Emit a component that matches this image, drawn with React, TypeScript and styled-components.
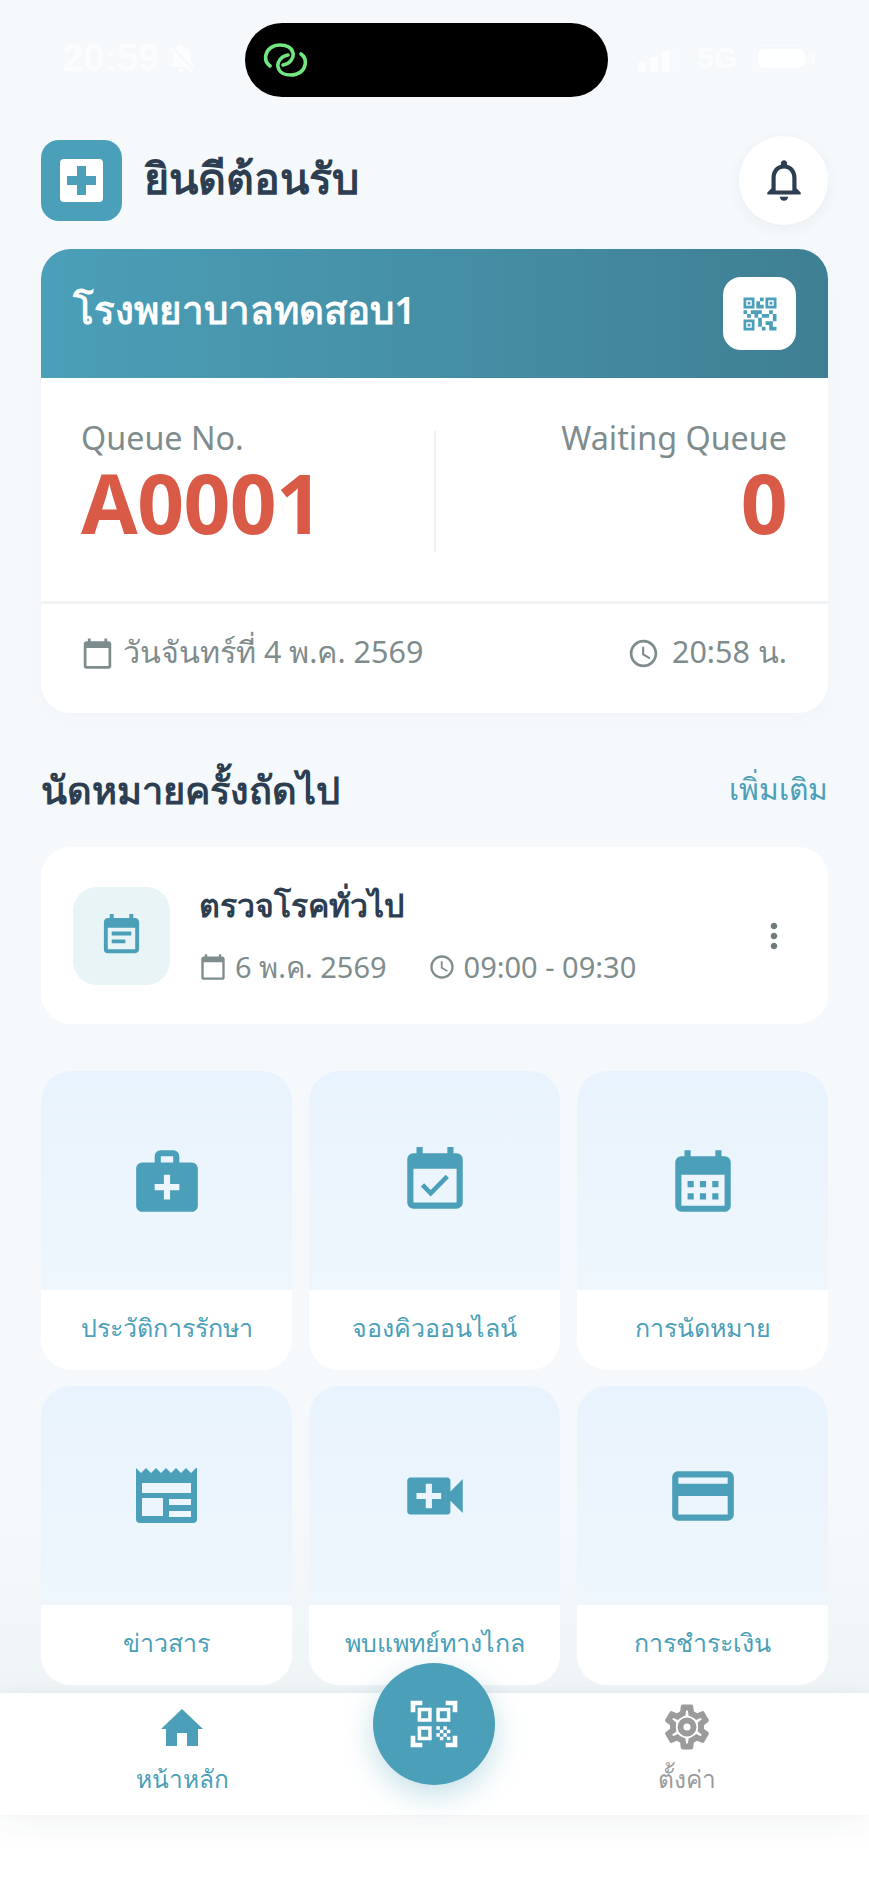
import React from 'react';
import styled, { createGlobalStyle } from 'styled-components';
import {
  MdMedicalServices, MdEventAvailable, MdCalendarMonth, MdVideoCall, MdCreditCard,
  MdOutlineSettings, MdQrCode2, MdQrCodeScanner, MdOutlineNotifications, MdCalendarToday,
  MdAccessTime, MdEventNote, MdMoreVert,
} from 'react-icons/md';

const TEAL = '#4b9fb8';
const INK = '#2c3e50';
const GREY = '#7f8c8d';
const RED = '#d95a47';

const Global = createGlobalStyle`
  html, body { margin: 0; padding: 0; background: #fff; }
  body { font-family: "Noto Sans", "DejaVu Sans", sans-serif; }
  * { box-sizing: border-box; }
`;

const Page = styled.div`
  width: 869px; height: 1884px; display: flex; flex-direction: column; overflow: hidden;
  background: #f5f9fc; position: relative;
`;
const StatusBar = styled.div`
  height: 135px; flex: none; padding: 23px 53px 0 62px; display: grid; grid-template-columns: 183px 363px 1fr; align-items: start;
  color: rgba(255,255,255,.62); font-family: "Liberation Sans", sans-serif; font-weight: 700;
`;
const StatusLeft = styled.div`
  display: flex; align-items: center; gap: 9px; height: 70px; font-size: 38px;
`;
const StatusRight = styled.div`
  display: flex; align-items: center; justify-content: flex-end; gap: 16px; height: 70px; font-size: 30px;
`;
const Island = styled.div`
  height: 74px; border-radius: 37px; background: #000; display: flex; align-items: center; padding-left: 18px;
`;
const Battery = styled.div`
  width: 57px; height: 29px; border-radius: 10px; padding: 3px; border: 2px solid rgba(255,255,255,.3); margin-right: 6px; position: relative;
  &::after {
    content: ""; position: absolute; right: -7px; top: 7px; width: 4px; height: 11px; border-radius: 0 3px 3px 0; background: rgba(255,255,255,.4);
  }
`;
const BatteryFill = styled.div`height: 100%; border-radius: 6px; background: rgba(255,255,255,.9);`;
const Content = styled.main`
  flex: 1; min-height: 0; padding: 0 41px; display: flex; flex-direction: column;
  background: linear-gradient(#f5f9fc 88%, #eff4f7 100%);
`;
const Header = styled.header`
  height: 90px; flex: none; display: flex; align-items: center; justify-content: space-between;
`;
const Brand = styled.div`display: flex; align-items: center; gap: 22px;`;
const Logo = styled.div`
  width: 81px; height: 81px; border-radius: 18px; background: ${TEAL}; display: flex; align-items: center; justify-content: center;
`;
const LogoCross = styled.div`
  width: 43px; height: 43px; border-radius: 4px; background: #fff; display: flex; align-items: center; justify-content: center;
`;
const Title = styled.h1`margin: 0; padding-bottom: 5px; font-size: 43px; font-weight: 600; color: ${INK}; line-height: 1;`;
const BellButton = styled.div`
  width: 89px; height: 89px; border-radius: 50%; background: #fff; display: flex; align-items: center; justify-content: center;
  box-shadow: 0 4px 16px rgba(44,62,80,.05); color: ${INK};
`;
const QueueCard = styled.section`
  margin-top: 24px; height: 464px; flex: none; border-radius: 30px; overflow: hidden; background: #fff; display: flex; flex-direction: column;
  box-shadow: 0 6px 24px rgba(44,62,80,.02);
`;
const QueueHeader = styled.div`
  height: 129px; flex: none; padding: 0 32px; display: flex; align-items: center; justify-content: space-between;
  background: linear-gradient(90deg, #4b9fb8, #3f7f93);
`;
const Hospital = styled.div`color: #fff; font-size: 38.5px; font-weight: 600; line-height: 1; padding-bottom: 8px;`;
const QrButton = styled.div`
  width: 73px; height: 73px; border-radius: 18px; background: #fff; color: ${TEAL}; display: flex; align-items: center; justify-content: center;
`;
const QueueBody = styled.div`
  height: 226px; flex: none; padding: 53px 41px 0 40px; display: grid; grid-template-columns: 1fr 1fr; align-items: start; border-bottom: 3px solid #f1f3f4;
`;
const QueueCol = styled.div<{ $right?: boolean }>`
  height: 121px; text-align: ${p => (p.$right ? 'right' : 'left')};
  ${p => (p.$right ? 'border-left: 2px solid #eef0f1;' : '')}
`;
const QueueLabel = styled.div`font-size: 32.3px; color: ${GREY}; line-height: 40px; margin-top: -14px;`;
const QueueValue = styled.div`font-size: 82px; line-height: 84px; font-weight: 700; color: ${RED}; letter-spacing: -0.6px; margin-top: 3px;`;
const QueueFoot = styled.div`
  flex: 1; padding: 0 41px 14px 40px; display: flex; align-items: center; justify-content: space-between; color: ${GREY}; font-size: 30.5px;
`;
const Meta = styled.div<{ $gap?: number; $drop?: number }>`
  display: flex; align-items: center; gap: ${p => p.$gap ?? 9}px;
  svg { transform: translateY(${p => p.$drop ?? 0}px); }
`;
const SectionHead = styled.div`
  margin-top: 45px; height: 62px; flex: none; display: flex; align-items: center; justify-content: space-between;
`;
const SectionTitle = styled.h2`margin: 0; font-size: 38px; font-weight: 600; color: ${INK}; line-height: 1;`;
const More = styled.div`font-size: 30px; color: ${TEAL}; font-weight: 500;`;
const Appointment = styled.section`
  margin-top: 27px; height: 177px; flex: none; border-radius: 30px; background: #fff; padding: 0 32px; display: flex; align-items: center;
`;
const ApptIcon = styled.div`
  width: 97px; height: 98px; border-radius: 24px; background: #e9f4f7; color: ${TEAL}; display: flex; align-items: center; justify-content: center; flex: none;
`;
const ApptBody = styled.div`flex: 1; margin-left: 29px; padding-bottom: 3px; display: flex; flex-direction: column; gap: 21px;`;
const ApptTitle = styled.div`font-size: 32px; font-weight: 600; color: ${INK}; line-height: 44px;`;
const ApptMeta = styled.div`display: flex; gap: 41px; font-size: 29px; color: ${GREY}; line-height: 38px;`;
const Dots = styled.div`color: #6f7b7d; display: flex; margin-right: 2px;`;
const Grid = styled.section`
  margin-top: 47px; display: grid; grid-template-columns: repeat(3, 1fr); gap: 16px 17px;
`;
const Tile = styled.div`
  height: 299px; border-radius: 30px; overflow: hidden; background: #fff; display: flex; flex-direction: column;
`;
const TileArt = styled.div`
  height: 219px; flex: none; background: linear-gradient(#e9f3fd, #eff7fd); color: ${TEAL}; display: flex; align-items: center; justify-content: center;
`;
const TileLabel = styled.div`
  flex: 1; padding-bottom: 5px; display: flex; align-items: center; justify-content: center; font-size: 25px; font-weight: 500; color: ${TEAL};
`;
const Nav = styled.nav`
  height: 122px; flex: none; background: #fff; display: grid; grid-template-columns: 1fr 141px 1fr; position: relative;
  box-shadow: 0 -2px 8px rgba(44,62,80,.03), 0 10px 30px rgba(44,62,80,.05); z-index: 1;
`;
const NavItem = styled.div<{ $active?: boolean }>`
  display: flex; flex-direction: column; align-items: center; gap: 7px; padding-top: 8px; font-size: 24.5px; line-height: 38px;
  color: ${p => (p.$active ? TEAL : '#9b9b9b')};
`;
const NavIcon = styled.div`height: 52px; display: flex; align-items: center; justify-content: center;`;
const Gear = styled(MdOutlineSettings)`
  path { stroke: currentColor; stroke-width: 0.7; }
  path[fill="none"] { stroke: none; }
`;
const FabSlot = styled.div`position: relative;`;
const Fab = styled.div`
  position: absolute; left: 9px; top: -30px; width: 122px; height: 122px; border-radius: 50%; background: ${TEAL}; color: #fff;
  display: flex; align-items: center; justify-content: center; box-shadow: 0 10px 30px rgba(75,159,184,.32);
`;
const Bottom = styled.div`height: 69px; flex: none; background: #fff;`;

const NewsIcon = () => (
  <svg width="61" height="55" viewBox="0 0 61 55" fill="currentColor" aria-hidden>
    <path fillRule="evenodd" d="M0 0l5 5 5-5 5 5 5-5 5 5 5-5 5 5 5-5 5 5 5-5 5 5 5-5h1v51a4 4 0 0 1-4 4H4a4 4 0 0 1-4-4V0z M6 15v10h49V15H6z M6 30v18h21V30H6z M33 31v6h22v-6H33z M33 43v6h22v-6H33z" />
  </svg>
);
const HomeIcon = () => (
  <svg width="42" height="37" viewBox="0 0 42 37" fill="currentColor" aria-hidden>
    <path fillRule="evenodd" d="M21 0l21 20h-5v17H26V24H16v13H5V20H0z" />
  </svg>
);
const BellSlash = () => (
  <svg width="27" height="29" viewBox="0 0 27 29" fill="currentColor" aria-hidden>
    <path d="M13 0c1.300 0 2 .8 2 2 5 1 7 5 7 9 0 4 1 7 4 10v2H3l-1-1c3-3 3-7 3-11 0-4 2-8 6-9 0-1 .7-2 2-2z" />
    <path d="M10 25h6a3 3 0 0 1-6 0z" />
    <path d="M2 1l24 26" stroke="#f5f9fc" strokeWidth="3" fill="none" />
    <path d="M1 3l24 26" stroke="currentColor" strokeWidth="2" fill="none" />
  </svg>
);
const LinkGlyph = () => (
  <svg width="45" height="34" viewBox="0 0 45 34" fill="none" stroke="#74e67f" strokeWidth="3.6" strokeLinecap="round" aria-hidden>
    <path d="M7 23C3 20 2 16 3 12 4 6 10 2 17 2c7 0 12 3 13 8 1 5-3 11-10 12" />
    <path d="M38 11c4 3 5 7 4 11-1 6-7 10-14 10-7 0-12-3-13-8-1-5 3-11 10-12" />
  </svg>
);
const Signal = () => (
  <svg width="43" height="27" viewBox="0 0 43 27" fill="rgba(255,255,255,.7)" aria-hidden>
    <rect x="0" y="17" width="8" height="10" rx="1" />
    <rect x="12" y="12" width="8" height="15" rx="1" />
    <rect x="24" y="6" width="8" height="21" rx="1" />
    <rect x="35" y="0" width="8" height="27" rx="1" opacity=".3" />
  </svg>
);

const tiles = [
  { label: 'ประวัติการรักษา', icon: <MdMedicalServices size={74} /> },
  { label: 'จองคิวออนไลน์', icon: <MdEventAvailable size={74} /> },
  { label: 'การนัดหมาย', icon: <MdCalendarMonth size={74} /> },
  { label: 'ข่าวสาร', icon: <NewsIcon /> },
  { label: 'พบแพทย์ทางไกล', icon: <MdVideoCall size={74} /> },
  { label: 'การชำระเงิน', icon: <MdCreditCard size={74} /> },
];

export default function App() {
  return (
    <Page>
      <Global />
      <StatusBar>
        <StatusLeft>20:59 <BellSlash /></StatusLeft>
        <Island><LinkGlyph /></Island>
        <StatusRight><Signal />5G<Battery><BatteryFill /></Battery></StatusRight>
      </StatusBar>
      <Content>
        <Header>
          <Brand>
            <Logo>
              <LogoCross>
                <svg width="29" height="29" viewBox="0 0 29 29" fill={TEAL} aria-hidden><path d="M10 0h9v10h10v9H19v10h-9V19H0v-9h10z" /></svg>
              </LogoCross>
            </Logo>
            <Title>ยินดีต้อนรับ</Title>
          </Brand>
          <BellButton><MdOutlineNotifications size={50} /></BellButton>
        </Header>
        <QueueCard>
          <QueueHeader>
            <Hospital>โรงพยาบาลทดสอบ1</Hospital>
            <QrButton><MdQrCode2 size={44} /></QrButton>
          </QueueHeader>
          <QueueBody>
            <QueueCol>
              <QueueLabel>Queue No.</QueueLabel>
              <QueueValue>A0001</QueueValue>
            </QueueCol>
            <QueueCol $right>
              <QueueLabel>Waiting Queue</QueueLabel>
              <QueueValue>0</QueueValue>
            </QueueCol>
          </QueueBody>
          <QueueFoot>
            <Meta $drop={2}><MdCalendarToday size={33} />วันจันทร์ที่ 4 พ.ค. 2569</Meta>
            <Meta $gap={12} $drop={2}><MdAccessTime size={33} />20:58 น.</Meta>
          </QueueFoot>
        </QueueCard>
        <SectionHead>
          <SectionTitle>นัดหมายครั้งถัดไป</SectionTitle>
          <More>เพิ่มเติม</More>
        </SectionHead>
        <Appointment>
          <ApptIcon><MdEventNote size={47} /></ApptIcon>
          <ApptBody>
            <ApptTitle>ตรวจโรคทั่วไป</ApptTitle>
            <ApptMeta>
              <Meta $gap={8}><MdCalendarToday size={28} />6 พ.ค. 2569</Meta>
              <Meta $gap={8}><MdAccessTime size={28} />09:00 - 09:30</Meta>
            </ApptMeta>
          </ApptBody>
          <Dots><MdMoreVert size={40} /></Dots>
        </Appointment>
        <Grid>
          {tiles.map(t => (
            <Tile key={t.label}>
              <TileArt>{t.icon}</TileArt>
              <TileLabel>{t.label}</TileLabel>
            </Tile>
          ))}
        </Grid>
      </Content>
      <Nav>
        <NavItem $active><NavIcon><HomeIcon /></NavIcon>หน้าหลัก</NavItem>
        <FabSlot><Fab><MdQrCodeScanner size={56} /></Fab></FabSlot>
        <NavItem><NavIcon><Gear size={52} /></NavIcon>ตั้งค่า</NavItem>
      </Nav>
      <Bottom />
    </Page>
  );
}
